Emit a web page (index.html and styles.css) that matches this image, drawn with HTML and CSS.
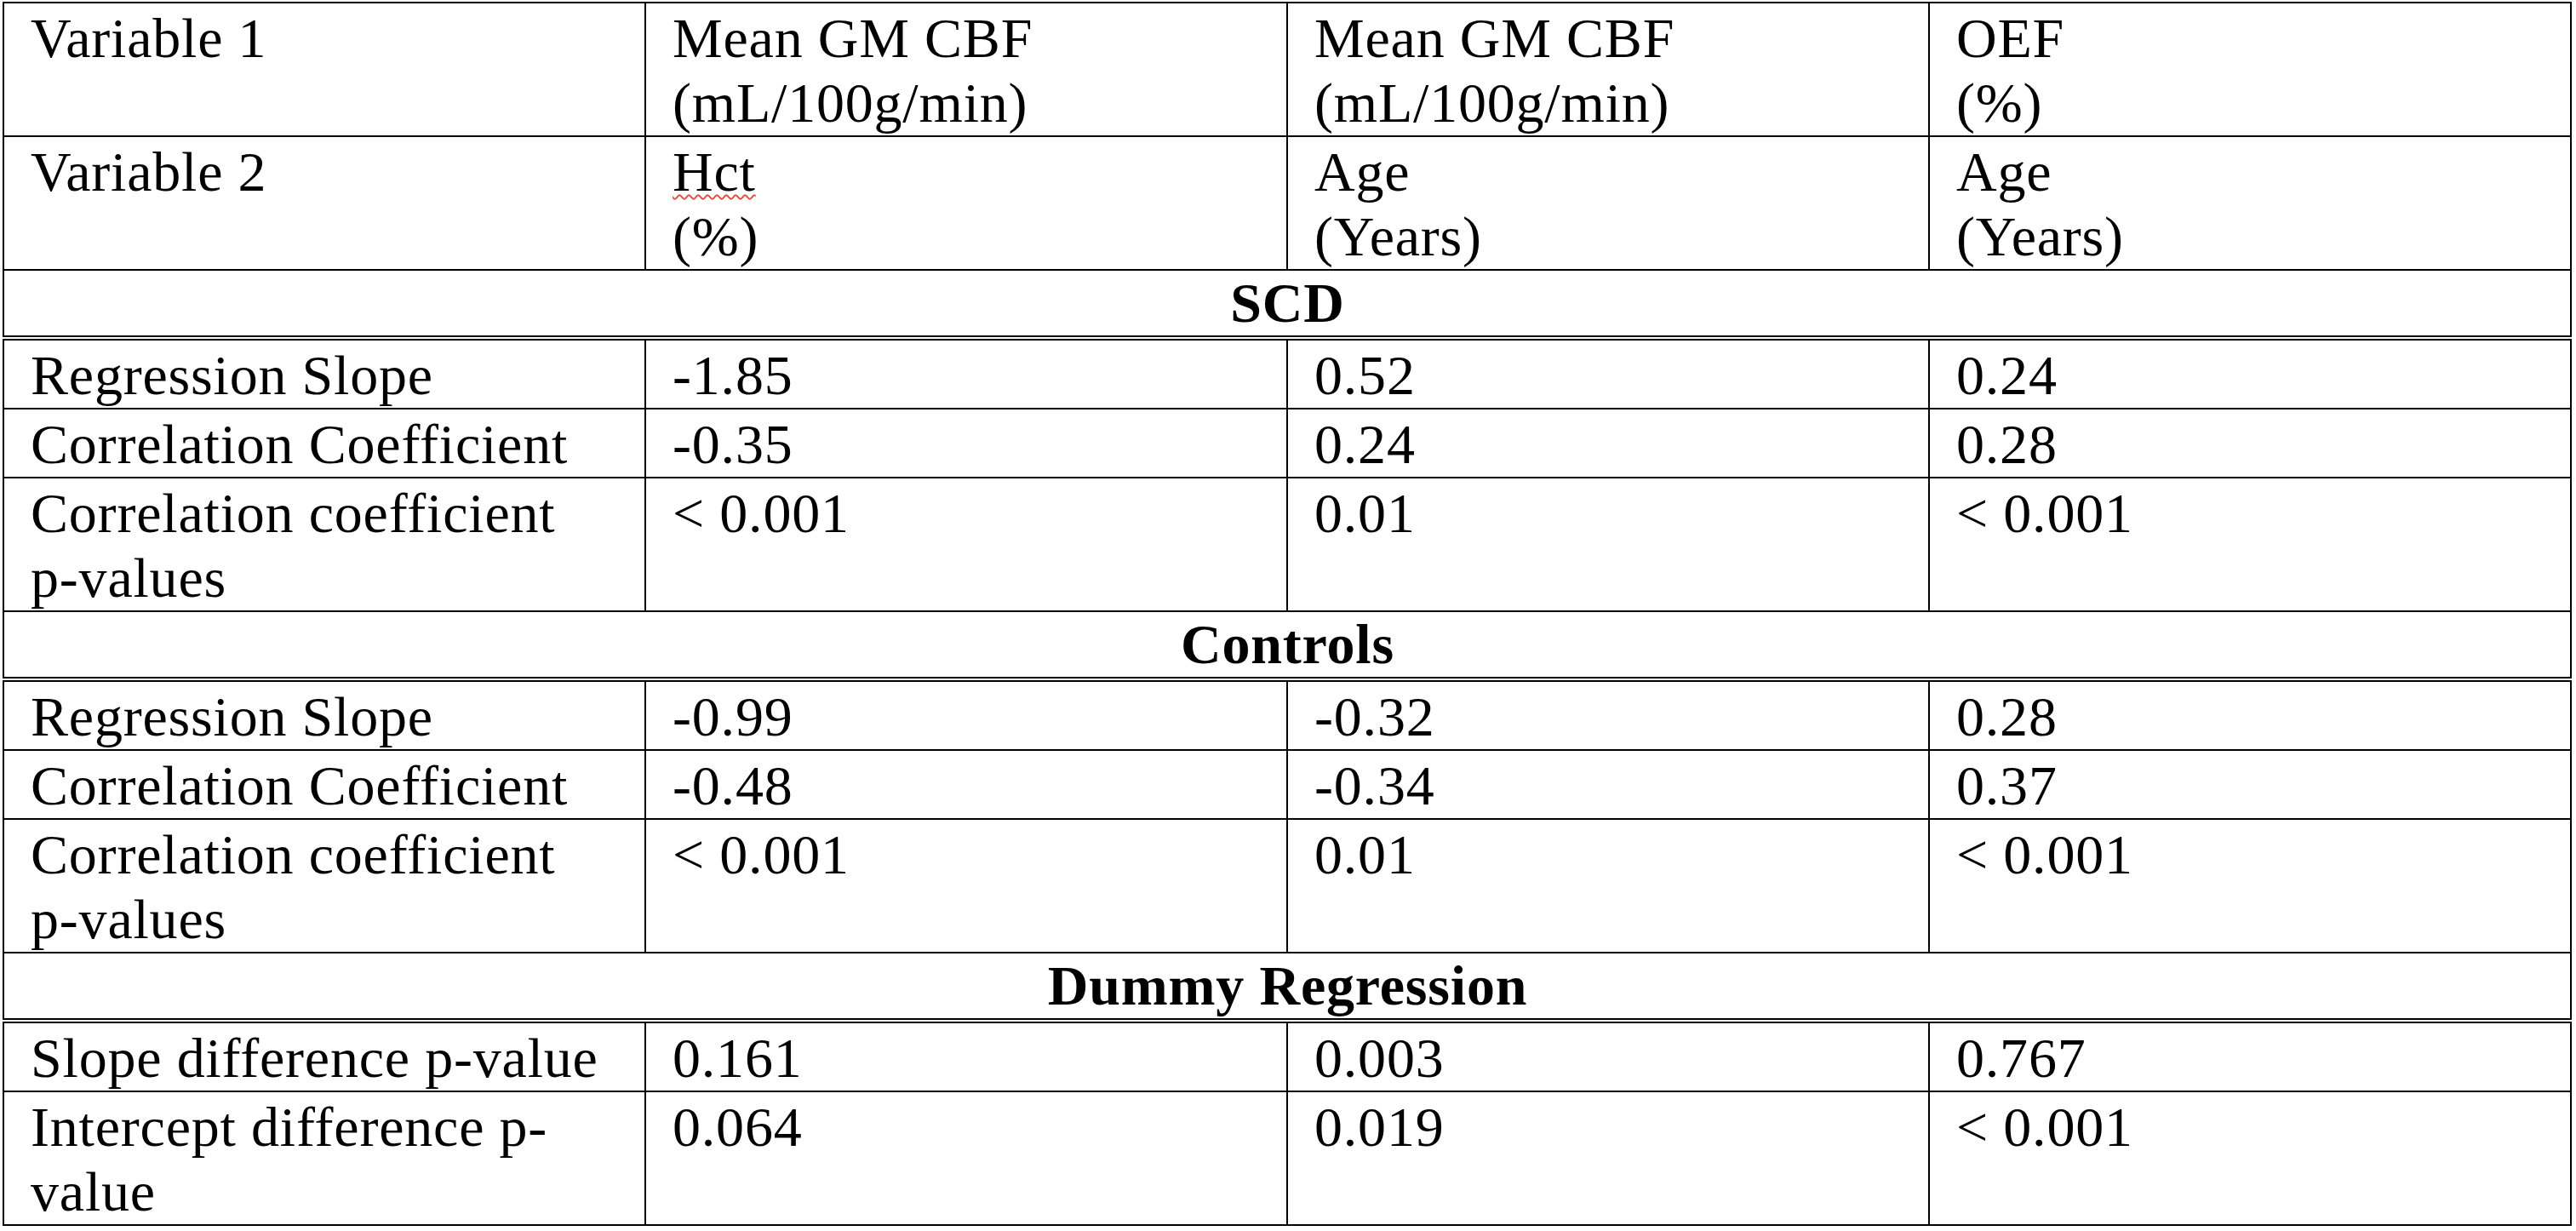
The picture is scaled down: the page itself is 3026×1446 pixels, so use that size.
FILE: index.html
```html
<!DOCTYPE html>
<html lang="en">
<head>
<meta charset="utf-8">
<title>Regression table</title>
<link rel="stylesheet" href="styles.css">
</head>
<body>
<table class="stats">
  <colgroup>
    <col class="c"><col class="c"><col class="c"><col class="c">
  </colgroup>
  <tbody>
    <tr>
      <td>Variable 1</td>
      <td>Mean GM CBF<br>(mL/100g/min)</td>
      <td>Mean GM CBF<br>(mL/100g/min)</td>
      <td>OEF<br>(%)</td>
    </tr>
    <tr>
      <td>Variable 2</td>
      <td><span class="spell">Hct</span><br>(%)</td>
      <td>Age<br>(Years)</td>
      <td>Age<br>(Years)</td>
    </tr>
    <tr class="section"><th colspan="4">SCD</th></tr>
    <tr>
      <td>Regression Slope</td>
      <td>-1.85</td>
      <td>0.52</td>
      <td>0.24</td>
    </tr>
    <tr>
      <td>Correlation Coefficient</td>
      <td>-0.35</td>
      <td>0.24</td>
      <td>0.28</td>
    </tr>
    <tr>
      <td>Correlation coefficient<br>p-values</td>
      <td>&lt; 0.001</td>
      <td>0.01</td>
      <td>&lt; 0.001</td>
    </tr>
    <tr class="section"><th colspan="4">Controls</th></tr>
    <tr>
      <td>Regression Slope</td>
      <td>-0.99</td>
      <td>-0.32</td>
      <td>0.28</td>
    </tr>
    <tr>
      <td>Correlation Coefficient</td>
      <td>-0.48</td>
      <td>-0.34</td>
      <td>0.37</td>
    </tr>
    <tr>
      <td>Correlation coefficient<br>p-values</td>
      <td>&lt; 0.001</td>
      <td>0.01</td>
      <td>&lt; 0.001</td>
    </tr>
    <tr class="section"><th colspan="4">Dummy Regression</th></tr>
    <tr>
      <td>Slope difference p-value</td>
      <td>0.161</td>
      <td>0.003</td>
      <td>0.767</td>
    </tr>
    <tr>
      <td>Intercept difference p-<br>value</td>
      <td>0.064</td>
      <td>0.019</td>
      <td>&lt; 0.001</td>
    </tr>
  </tbody>
</table>
</body>
</html>
```
FILE: styles.css
```css
html, body {
  margin: 0;
  padding: 0;
  background: #ffffff;
}

body {
  font-family: "Liberation Serif", "Times New Roman", serif;
  color: #000000;
}

.stats {
  margin: 2px 0 0 3px;
  width: 3018px;
  table-layout: fixed;
  border-collapse: collapse;
  font-size: 66px;
  line-height: 76px;
  letter-spacing: 0.8px;
}

.stats td,
.stats th {
  border: 2px solid #000000;
  padding: 3px 30px 0 31px;
  vertical-align: top;
  text-align: left;
  font-weight: normal;
  white-space: nowrap;
}

.stats .section th {
  text-align: center;
  font-weight: bold;
  padding-top: 0;
  border-bottom: 6px double #000000;
}

.spell {
  text-decoration: underline wavy #e5493d;
  text-decoration-thickness: 2px;
  text-underline-offset: 4px;
}
```
